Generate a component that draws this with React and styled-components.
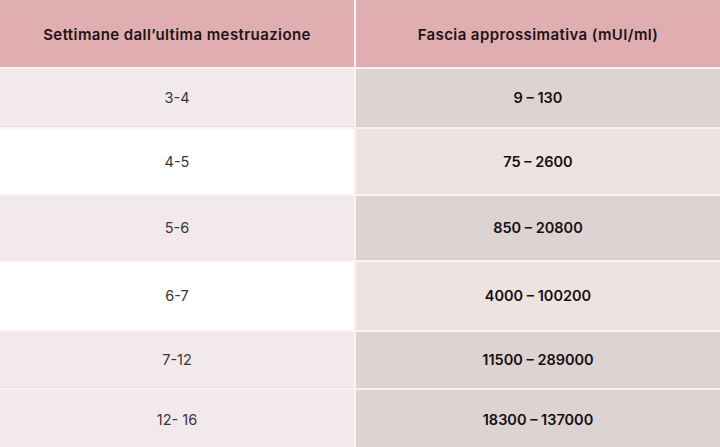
import React from "react";
import styled, { createGlobalStyle } from "styled-components";

const GlobalStyle = createGlobalStyle`
  html, body {
    margin: 0;
    padding: 0;
    background: #ffffff;
  }
  *, *::before, *::after {
    box-sizing: border-box;
  }
`;

const rows = [
  { weeks: "3-4", range: "9 – 130", shaded: true, height: 58 },
  { weeks: "4-5", range: "75 – 2600", shaded: false, height: 65 },
  { weeks: "5-6", range: "850 – 20800", shaded: true, height: 64 },
  { weeks: "6-7", range: "4000 – 100200", shaded: false, height: 68 },
  { weeks: "7-12", range: "11500 – 289000", shaded: true, height: 56 },
  { weeks: "12- 16", range: "18300 – 137000", shaded: true, height: 60 },
];

const Table = styled.div`
  width: 720px;
  height: 447px;
  overflow: hidden;
  display: grid;
  grid-template-columns: 354px 1fr;
  align-content: start;
  column-gap: 2px;
  row-gap: 2px;
  background: #fbf3f2;
  font-family: Inter, "Open Sans", sans-serif;
`;

const HeadCell = styled.div`
  height: 67px;
  display: flex;
  align-items: center;
  justify-content: center;
  background: #e0aeb0;
  border-top: 2px solid #d9b3ad;
  color: #1e1414;
  font-size: 15px;
  font-weight: 600;
  letter-spacing: 0.4px;
`;

const Cell = styled.div`
  height: ${(p) => p.$h}px;
  display: flex;
  align-items: center;
  justify-content: center;
  font-size: 14.5px;
  background: ${(p) =>
    p.$right
      ? p.$shaded
        ? "#ddd3d3"
        : "#efe3e2"
      : p.$shaded
      ? "#f2e9ec"
      : "#ffffff"};
  color: ${(p) => (p.$right ? "#141010" : "#3a3636")};
  font-weight: ${(p) => (p.$right ? 600 : 400)};
  border-bottom: 1px solid
    ${(p) => (p.$shaded ? (p.$right ? "#d6cbcb" : "#e9e2e4") : "transparent")};
`;

export default function App() {
  return (
    <>
      <GlobalStyle />
      <Table>
        <HeadCell>Settimane dall’ultima mestruazione</HeadCell>
        <HeadCell>Fascia approssimativa (mUI/ml)</HeadCell>
        {rows.map((r) => (
          <React.Fragment key={r.weeks}>
            <Cell $shaded={r.shaded} $h={r.height}>
              {r.weeks}
            </Cell>
            <Cell $right $shaded={r.shaded} $h={r.height}>
              {r.range}
            </Cell>
          </React.Fragment>
        ))}
      </Table>
    </>
  );
}
